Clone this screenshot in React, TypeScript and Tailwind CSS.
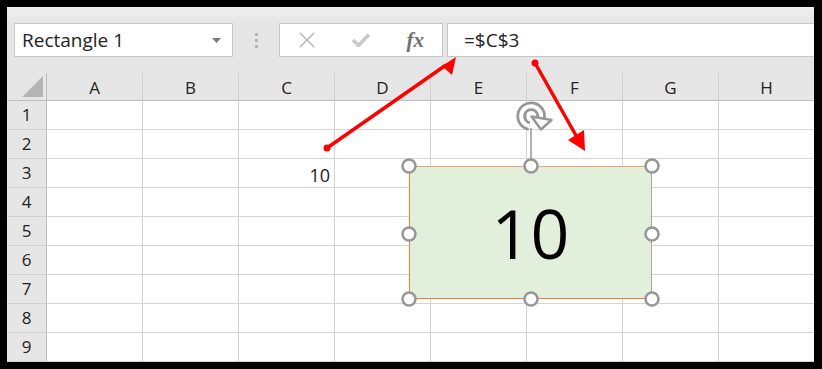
const cols = ['A', 'B', 'C', 'D', 'E', 'F', 'G', 'H'];
const rows = [1, 2, 3, 4, 5, 6, 7, 8, 9];

function Handle({ x, y }: { x: number; y: number }) {
  return <circle cx={x} cy={y} r={6.5} fill="#fff" stroke="#979797" strokeWidth={2.5} />;
}

export default function App() {
  return (
    <div className="relative w-[822px] h-[369px] bg-black pt-[7px] pl-[7px] pr-[8px] pb-[7px] font-['Open_Sans',sans-serif] text-[#222]">
      <div className="flex h-full flex-col overflow-hidden bg-[#e6e6e6]">
        {/* formula bar */}
        <div className="flex h-[66px] shrink-0 items-start bg-gradient-to-b from-[#eeeeee] to-[#e6e6e6] to-[25%] pl-[7px] pt-[16px]">
          <div className="flex h-[34px] w-[219px] items-center justify-between border border-[#c6c6c6] bg-white pl-[7px] pr-[11px]">
            <span className="text-[19px] leading-none">Rectangle 1</span>
            <svg width="9" height="5" viewBox="0 0 9 5">
              <polygon points="0,0 9,0 4.5,5" fill="#7a7a7a" />
            </svg>
          </div>
          <div className="flex h-[34px] w-[46px] flex-col items-center justify-center gap-[3px]">
            <div className="h-[3px] w-[3px] bg-[#b5b5b5]" />
            <div className="h-[3px] w-[3px] bg-[#b5b5b5]" />
            <div className="h-[3px] w-[3px] bg-[#b5b5b5]" />
          </div>
          <div className="flex h-[34px] w-[164px] items-center border border-[#c6c6c6] bg-white">
            <div className="flex w-[54px] justify-center">
              <svg width="16" height="16" viewBox="0 0 16 16">
                <path d="M1 1 L15 15 M15 1 L1 15" stroke="#b9b9b9" strokeWidth="1.6" />
              </svg>
            </div>
            <div className="flex w-[56px] justify-center">
              <svg width="18" height="14" viewBox="0 0 18 14">
                <path d="M1 7 L6.5 12.5 L17 1.5" stroke="#c8c8c8" strokeWidth="3.5" fill="none" />
              </svg>
            </div>
            <div className="flex w-[54px] justify-center">
              <span className="font-['Liberation_Serif',serif] text-[21px] font-bold italic leading-none text-[#707070]">fx</span>
            </div>
          </div>
          <div className="ml-[4px] flex h-[34px] flex-1 items-center border-y border-l border-[#c6c6c6] bg-white pl-[16px]">
            <span className="text-[19px] leading-none">=$C$3</span>
          </div>
        </div>

        {/* grid */}
        <div className="grid flex-1 grid-cols-[40px_repeat(8,96px)] grid-rows-[28px_repeat(9,29px)] bg-white">
          <div className="flex items-end justify-end border-r border-b border-[#bdbdbd] bg-[#e6e6e6] pr-[3px] pb-[3px]">
            <svg width="21" height="21" viewBox="0 0 21 21">
              <polygon points="0,21 21,21 21,0" fill="#b5b5b5" />
            </svg>
          </div>
          {cols.map((c) => (
            <div
              key={c}
              className="flex items-center justify-center border-r border-b border-r-[#d0d0d0] border-b-[#bdbdbd] bg-[#e6e6e6] pt-[2px] text-[17px]"
            >
              {c}
            </div>
          ))}
          {rows.map((r) => (
            <div key={r} className="contents">
              <div className="flex items-center justify-center border-r border-b border-r-[#bdbdbd] border-b-[#d0d0d0] bg-[#e6e6e6] text-[17px]">
                {r}
              </div>
              {cols.map((c) => (
                <div
                  key={c}
                  className="flex items-end justify-end border-r border-b border-[#d4d4d4] pr-[4px] pb-[3px] text-[18px] leading-none"
                >
                  {r === 3 && c === 'C' ? '10' : ''}
                </div>
              ))}
            </div>
          ))}
        </div>
      </div>

      {/* selected shape */}
      <div className="absolute left-[409px] top-[166px] flex h-[133px] w-[243px] items-center justify-center border-[1.5px] border-[#ed7d31] border-r-[#a8a8a8] border-t-[#e9a26f] bg-[#e2efda]">
        <span className="text-[68px] leading-none text-black">10</span>
      </div>

      <svg className="pointer-events-none absolute inset-0" width="822" height="369" viewBox="0 0 822 369">
        {/* rotate handle */}
        <line x1="531" y1="128" x2="531" y2="160" stroke="#979797" strokeWidth="1.5" />
        <path d="M529.3 126 A10 10 0 1 1 541 118" fill="none" stroke="#979797" strokeWidth="9.5" />
        <path d="M529.3 126 A10 10 0 1 1 541 118" fill="none" stroke="#fff" strokeWidth="4" />
        <polygon points="531.5,116.5 551.5,120 541,129.5" fill="#fff" stroke="#979797" strokeWidth="2.5" strokeLinejoin="round" />

        <Handle x={409} y={166} />
        <Handle x={531} y={166} />
        <Handle x={652} y={166} />
        <Handle x={409} y={234} />
        <Handle x={652} y={234} />
        <Handle x={409} y={299} />
        <Handle x={531} y={299} />
        <Handle x={652} y={299} />

        {/* arrows */}
        <circle cx="327" cy="148" r="3.5" fill="#ff0000" />
        <line x1="327" y1="148" x2="446" y2="65" stroke="#ff0000" strokeWidth="3.5" />
        <polygon points="456,57 442,66 452,75" fill="#ff0000" />

        <circle cx="535" cy="63" r="3.5" fill="#ff0000" />
        <line x1="535" y1="63" x2="578" y2="139" stroke="#ff0000" strokeWidth="3.5" />
        <polygon points="585,151 568,140 584,130" fill="#ff0000" />
      </svg>
    </div>
  );
}
